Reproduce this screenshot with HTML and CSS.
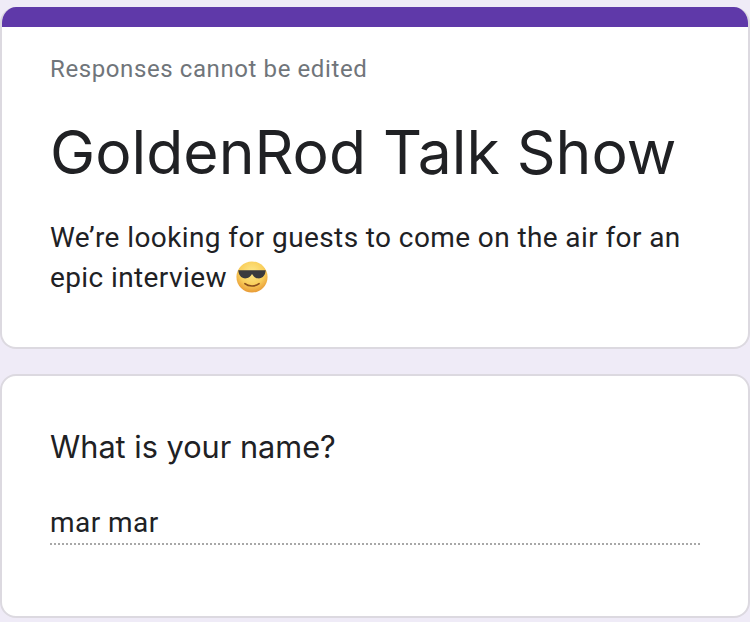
FILE: index.html
```html
<!DOCTYPE html>
<html lang="en">
<head>
<meta charset="utf-8">
<title>GoldenRod Talk Show</title>
<link rel="stylesheet" href="styles.css">
</head>
<body>
<main class="form">
  <section class="card card-header">
    <div class="accent"></div>
    <div class="header-body">
      <p class="note">Responses cannot be edited</p>
      <h1 class="title">GoldenRod Talk Show</h1>
      <p class="desc">We’re looking for guests to come on the air for an epic interview <svg class="emoji" viewBox="0 0 36 36" aria-label="smiling face with sunglasses">
        <defs>
          <radialGradient id="face" cx="50%" cy="35%" r="65%">
            <stop offset="0" stop-color="#fde88a"/>
            <stop offset="0.6" stop-color="#f9cf5c"/>
            <stop offset="1" stop-color="#e89a35"/>
          </radialGradient>
        </defs>
        <circle cx="18" cy="18" r="17.5" fill="url(#face)"/>
        <path d="M2.5 10.5 H33.5 L33 13 C32 18 28 20 24.5 19.5 C21 19 19.5 16.5 18 14.5 C16.5 16.5 15 19 11.5 19.5 C8 20 4 18 3 13 Z" fill="#3a3a3e"/>
        <path d="M10 25.5 C14 29 22 29 26 25.5" fill="none" stroke="#8a4f1c" stroke-width="1.8" stroke-linecap="round"/>
      </svg></p>
    </div>
  </section>
  <section class="card card-question">
    <h2 class="question">What is your name?</h2>
    <div class="answer">mar mar</div>
  </section>
</main>
</body>
</html>
```
FILE: styles.css
```css
* { box-sizing: border-box; }
html, body { margin: 0; padding: 0; }
body {
  width: 750px;
  height: 622px;
  overflow: hidden;
  background: #efebf7;
  font-family: Roboto, "Liberation Sans", sans-serif;
  color: #202124;
}
.form {
  display: flex;
  flex-direction: column;
  gap: 25px;
  padding-top: 7px;
}
.card {
  background: #fff;
  border: 2px solid #dcd9e0;
  border-radius: 16px;
  overflow: hidden;
}
.card-header {
  height: 342px;
  border-top: 0;
}
.accent {
  height: 20px;
  margin: 0 -2px;
  background: #5f39a9;
}
.header-body {
  padding: 0 48px;
}
.note {
  margin: 27px 0 0;
  font-size: 24px;
  line-height: 30px;
  letter-spacing: 0.6px;
  color: #70757a;
}
.title {
  margin: 33px 0 0;
  font-family: Inter, Roboto, sans-serif;
  font-size: 60.6px;
  line-height: 70px;
  font-weight: 400;
  color: #202124;
}
.desc {
  margin: 31px 0 0;
  font-size: 28px;
  line-height: 40px;
  letter-spacing: 0.4px;
}
.emoji {
  width: 32px;
  height: 32px;
  vertical-align: -6px;
  margin-left: 2px;
}
.card-question {
  height: 244px;
  padding: 0 48px;
}
.question {
  margin: 51px 0 0;
  font-family: Inter, Roboto, sans-serif;
  font-size: 30.7px;
  line-height: 40px;
  font-weight: 400;
}
.answer {
  margin-top: 39px;
  height: 39px;
  font-size: 28px;
  line-height: 34px;
  letter-spacing: 0.45px;
  border-bottom: 2px dotted #a8a8a8;
}
```
